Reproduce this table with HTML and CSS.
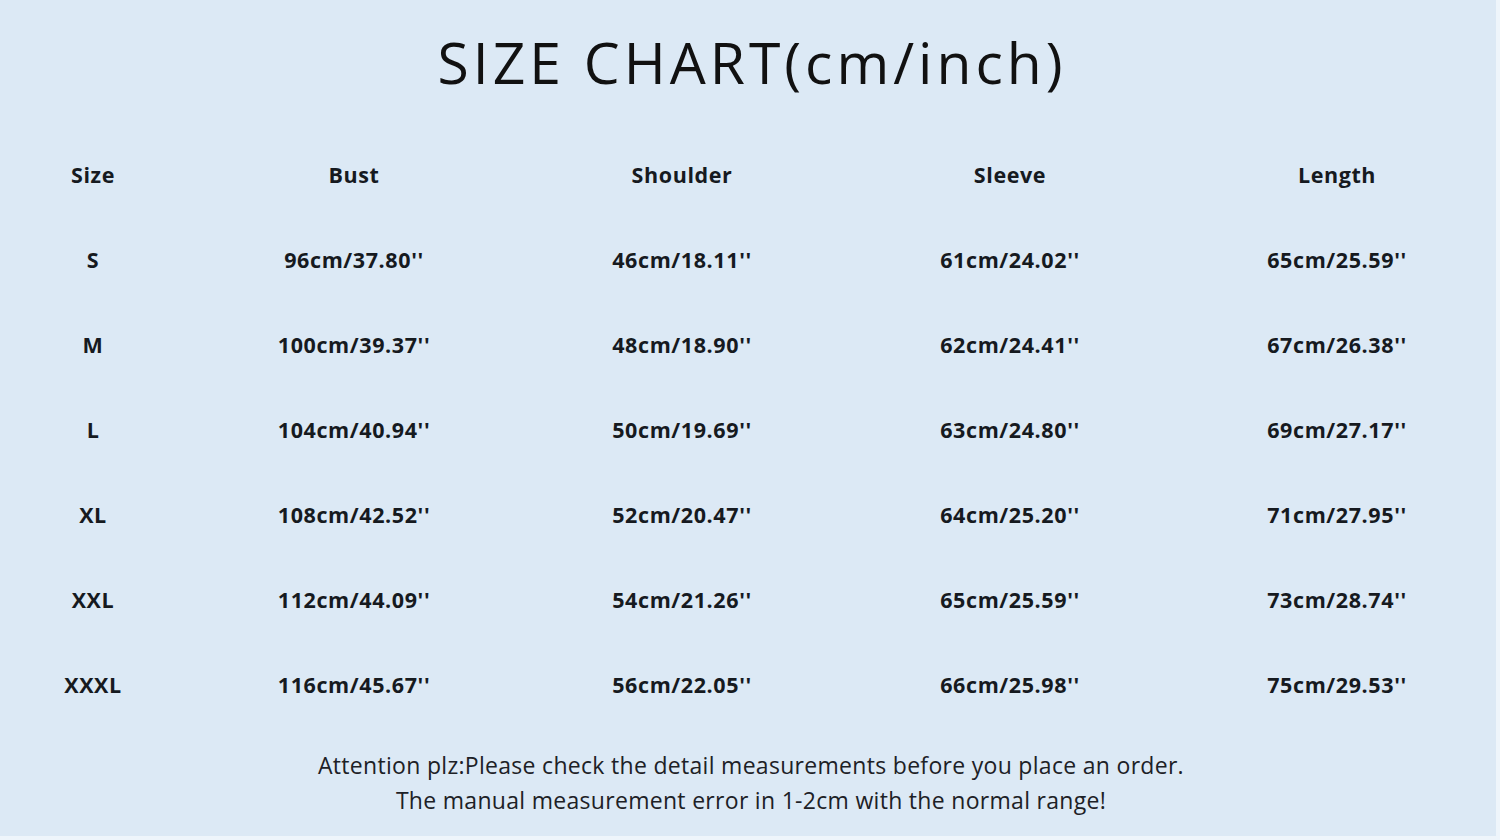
FILE: index.html
```html
<!DOCTYPE html>
<html>
<head>
<meta charset="utf-8">
<link rel="stylesheet" href="styles.css">
</head>
<body>
<div class="page">
  <h1 class="title">SIZE CHART(cm/inch)</h1>
  <div class="chart">
    <div class="row head">
      <div>Size</div><div>Bust</div><div>Shoulder</div><div>Sleeve</div><div>Length</div>
    </div>
    <div class="row">
      <div>S</div><div>96cm/37.80''</div><div>46cm/18.11''</div><div>61cm/24.02''</div><div>65cm/25.59''</div>
    </div>
    <div class="row">
      <div>M</div><div>100cm/39.37''</div><div>48cm/18.90''</div><div>62cm/24.41''</div><div>67cm/26.38''</div>
    </div>
    <div class="row">
      <div>L</div><div>104cm/40.94''</div><div>50cm/19.69''</div><div>63cm/24.80''</div><div>69cm/27.17''</div>
    </div>
    <div class="row">
      <div>XL</div><div>108cm/42.52''</div><div>52cm/20.47''</div><div>64cm/25.20''</div><div>71cm/27.95''</div>
    </div>
    <div class="row">
      <div>XXL</div><div>112cm/44.09''</div><div>54cm/21.26''</div><div>65cm/25.59''</div><div>73cm/28.74''</div>
    </div>
    <div class="row">
      <div>XXXL</div><div>116cm/45.67''</div><div>56cm/22.05''</div><div>66cm/25.98''</div><div>75cm/29.53''</div>
    </div>
  </div>
  <div class="note">
    <p>Attention plz:Please check the detail measurements before you place an order.</p>
    <p>The manual measurement error in 1-2cm with the normal range!</p>
  </div>
</div>
</body>
</html>
```

FILE: styles.css
```css
html, body {
  margin: 0;
  padding: 0;
  background: #eef5fb;
}
.page {
  box-sizing: border-box;
  width: 1496px;
  height: 836px;
  background: #dce9f5;
  color: #161a1f;
  overflow: hidden;
}
.title {
  margin: 0;
  padding-top: 27px;
  height: 106px;
  line-height: 70px;
  text-align: center;
  font-family: "Open Sans", "DejaVu Sans", sans-serif;
  font-weight: 400;
  font-size: 57px;
  color: #111;
  letter-spacing: 4px;
  padding-left: 8px;
}
.chart {
  display: flex;
  flex-direction: column;
  margin-top: -1px;
}
.row {
  display: grid;
  grid-template-columns: 186px 336px 320px 336px 318px;
  height: 85px;
  align-items: center;
  text-align: center;
  font-family: "Open Sans", "Noto Sans", sans-serif;
  font-weight: 700;
  font-size: 21.5px;
  letter-spacing: 0.6px;
}
.note {
  margin-top: 21px;
  padding-left: 6px;
  text-align: center;
  font-family: "Open Sans", "Noto Sans", sans-serif;
  font-size: 23px;
  line-height: 35px;
  letter-spacing: 0.3px;
  color: #1d2126;
}
.note p {
  margin: 0;
}
```
